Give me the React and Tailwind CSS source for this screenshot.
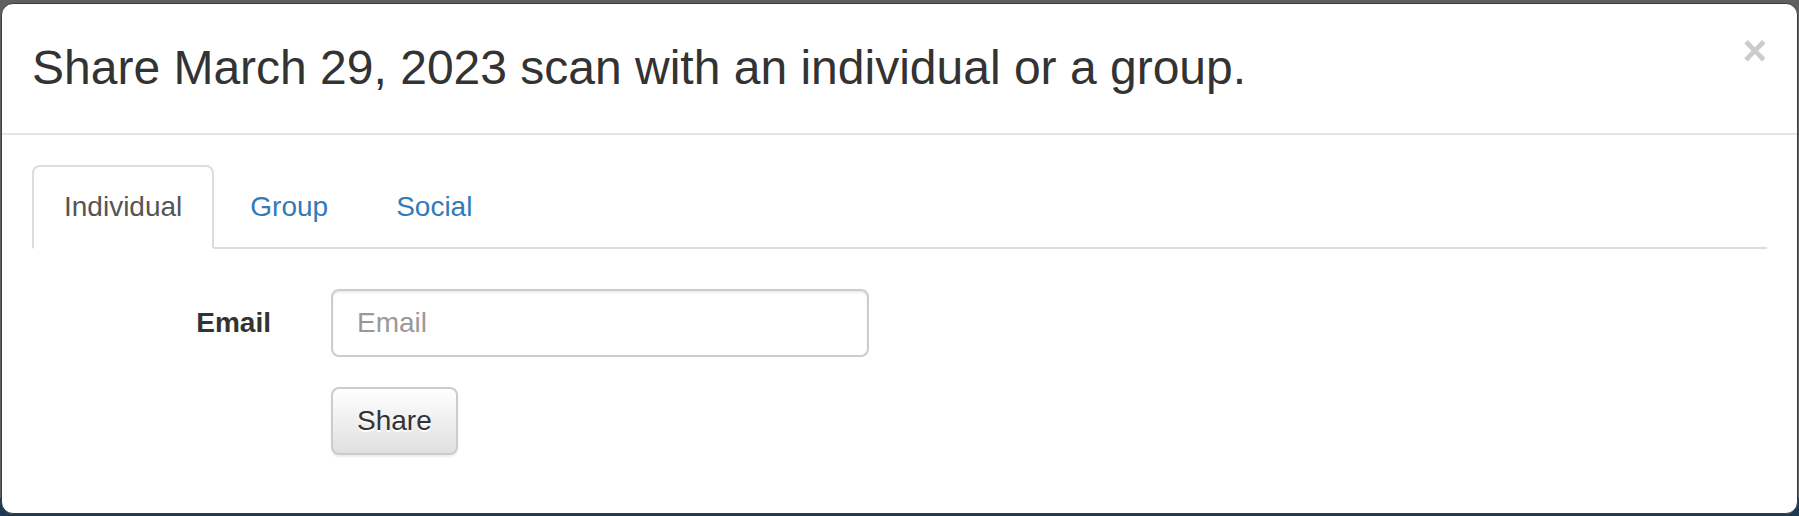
import React, { useState } from "react";

const tabs = ["Individual", "Group", "Social"];

const App = () => {
  const [active, setActive] = useState("Individual");

  return (
    <div className="w-[1799px] h-[516px] overflow-hidden bg-[linear-gradient(to_bottom,#5f5f5f_0,#5f5f5f_498px,#1d3a52_498px)] font-['Liberation_Sans',Arial,sans-serif]">
      {/* page behind the backdrop, only a sliver shows */}
      <div className="h-[3px] overflow-hidden">
        <div className="-mt-[26px] flex text-[28px] leading-[28px] text-[#3d3d3d]">
          <span className="-ml-[14px] w-[174px]">Variants</span>
          <span className="w-[1508px]">Share</span>
          <span>Version</span>
        </div>
      </div>

      <div className="ml-[1px] w-[1797px] h-[511px] overflow-hidden bg-white border border-[#3c3c3c] rounded-[12px]">
        {/* header */}
        <div className="flex items-start justify-between p-[30px] border-b-2 border-[#e5e5e5]">
          <h4 className="m-0 text-[48px] leading-[68.57px] font-normal text-[#333]">
            Share March 29, 2023 scan with an individual or a group.
          </h4>
          <button className="-mt-[4px] text-[42px] leading-[42px] font-bold text-black opacity-20">
            ×
          </button>
        </div>

        {/* body */}
        <div className="p-[30px]">
          <ul className="flex border-b-2 border-[#ddd]">
            {tabs.map((t) => (
              <li key={t} className="-mb-[2px] mr-[4px]">
                <a
                  onClick={() => setActive(t)}
                  className={
                    t === active
                      ? "block px-[30px] py-[20px] text-[28px] leading-[40px] text-[#555] bg-white border-2 border-[#ddd] border-b-transparent rounded-t-[8px] cursor-default"
                      : "block px-[30px] py-[20px] text-[28px] leading-[40px] text-[#337ab7] border-2 border-transparent rounded-t-[8px] cursor-pointer"
                  }
                >
                  {t}
                </a>
              </li>
            ))}
          </ul>

          <div className="pt-[40px] -mx-[30px]">
            <div className="flex mb-[30px]">
              <label className="w-[299px] pr-[30px] pt-[14px] text-right text-[28px] leading-[40px] font-bold text-[#333]">
                Email
              </label>
              <div className="w-[598px] px-[30px]">
                <input
                  type="email"
                  placeholder="Email"
                  className="block w-full h-[68px] px-[24px] py-[12px] text-[28px] text-[#555] bg-white border-2 border-[#ccc] rounded-[8px] shadow-[inset_0_2px_2px_rgba(0,0,0,0.075)] placeholder:text-[#999] outline-none"
                />
              </div>
            </div>
            <div className="ml-[299px] px-[30px]">
              <button className="px-[24px] py-[12px] text-[28px] leading-[40px] text-[#333] border-2 border-[#ccc] rounded-[8px] bg-[linear-gradient(to_bottom,#fff_0,#e0e0e0_100%)] shadow-[inset_0_2px_0_rgba(255,255,255,0.15),0_2px_2px_rgba(0,0,0,0.075)] [text-shadow:0_2px_0_#fff]">
                Share
              </button>
            </div>
          </div>
        </div>
      </div>
    </div>
  );
};

export default App;
